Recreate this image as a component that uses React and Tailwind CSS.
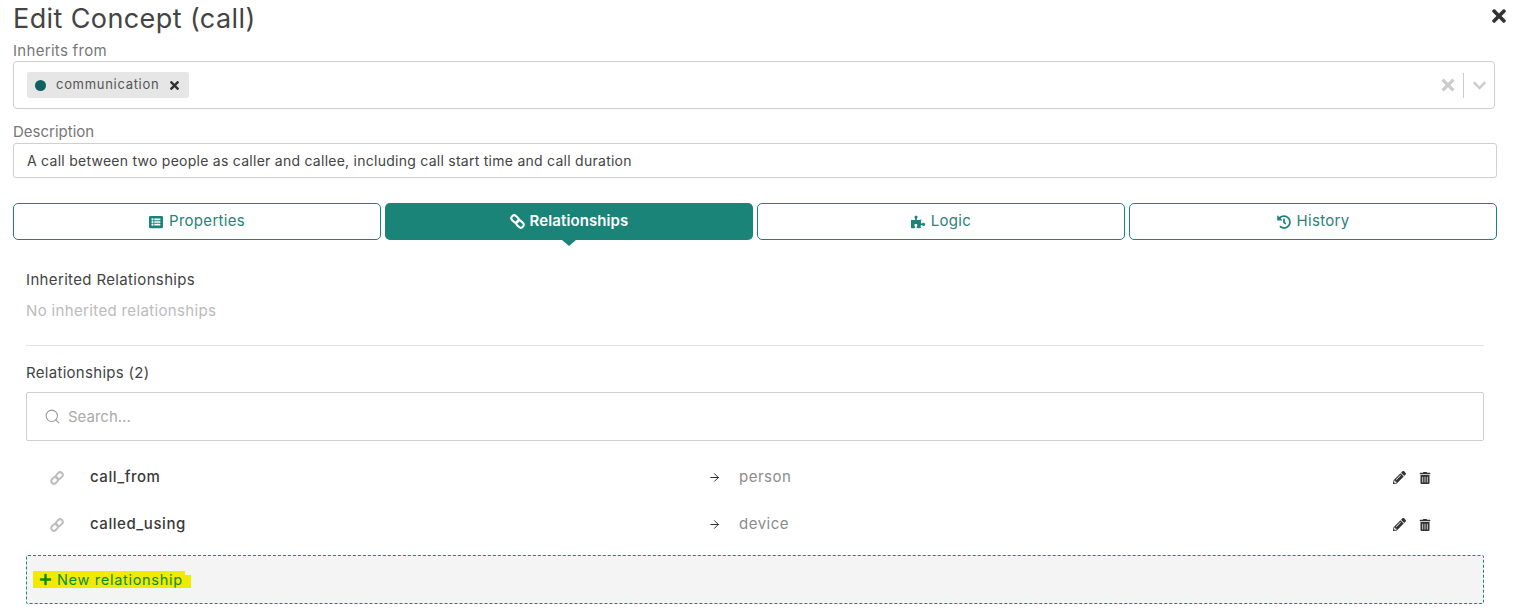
import React from 'react';
import { FaTimes, FaChevronDown, FaListAlt, FaPuzzlePiece, FaHistory, FaPencilAlt, FaTrashAlt, FaPlus } from 'react-icons/fa';
import { ArrowRight, Search } from 'lucide-react';

const tabs = [
  { label: 'Properties', icon: FaListAlt },
  { label: 'Relationships', active: true },
  { label: 'Logic', icon: FaPuzzlePiece },
  { label: 'History', icon: FaHistory },
];

const relationships = [
  { name: 'call_from', target: 'person' },
  { name: 'called_using', target: 'device' },
];

// two chain links, tilted like the old font-awesome link glyph
function ChainIcon({ className, flip }) {
  return (
    <svg viewBox="0 0 16 16" fill="none" stroke="currentColor" strokeWidth="2.2" className={className}>
      <g transform={flip ? 'rotate(45 8 8)' : 'rotate(-45 8 8)'}>
        <rect x="0" y="5" width="8.5" height="6" rx="3" />
        <rect x="7.5" y="5" width="8.5" height="6" rx="3" />
      </g>
    </svg>
  );
}

function Tab({ label, icon: Icon, active }) {
  if (active) {
    return (
      <button className="relative flex h-[37px] items-center justify-center gap-[5px] rounded-[5px] bg-[#1a8478] text-[15px] font-semibold tracking-[0.1px] text-white">
        <ChainIcon flip className="h-[15px] w-[15px]" />
        {label}
        <span className="absolute left-1/2 top-full -ml-[7px] h-0 w-0 border-x-[7px] border-t-[6px] border-x-transparent border-t-[#1a8478]" />
      </button>
    );
  }
  return (
    <button className="flex h-[37px] items-center justify-center gap-[6px] rounded-[5px] border border-[#1a8478] bg-white text-[15px] tracking-[0.3px] text-[#2b8177]">
      <Icon className="text-[14px] text-[#1a8478]" />
      {label}
    </button>
  );
}

function RelationshipRow({ name, target }) {
  return (
    <div className="flex h-[47px] items-center">
      <ChainIcon className="ml-[24px] h-[14px] w-[14px] text-[#bdbdbd]" />
      <span className="ml-[26px] w-[618px] text-[15px] font-medium tracking-[0.55px] text-[#3a3a3a]">{name}</span>
      <ArrowRight className="h-[13px] w-[13px] text-[#222]" strokeWidth={1.75} />
      <span className="ml-[18px] flex-1 text-[15px] tracking-[0.5px] text-[#8c8c8c]">{target}</span>
      <FaPencilAlt className="text-[13px] text-[#333]" />
      <FaTrashAlt className="ml-[13px] mr-[53px] text-[12px] text-[#333]" />
    </div>
  );
}

export default function App() {
  return (
    <div className="relative h-[616px] w-[1513px] overflow-hidden bg-white pl-[13px] pr-[16px] font-['Inter',sans-serif] text-[#444]">
      <FaTimes className="absolute right-[4px] top-[6px] text-[20px] text-[#333]" />

      <h1 className="h-[40px] text-[27px] leading-[37px] tracking-[0.4px] text-[#444]">Edit Concept (call)</h1>

      <div className="h-[21px] text-[15px] leading-[21px] tracking-[0.3px] text-[#777]">Inherits from</div>
      <div className="mr-[2px] flex h-[48px] items-center rounded-[4px] border border-[#cfcfcf] pl-[13px] pr-[7px]">
        <div className="flex h-[26px] w-[162px] items-center rounded-[2px] bg-[#e6e6e6] pl-[8px] text-[13px] tracking-[0.7px] text-[#555]">
          <span className="h-[11px] w-[11px] rounded-full bg-[#0f5f63]" />
          <span className="ml-[10px]">communication</span>
          <FaTimes className="ml-[9px] text-[13px] text-[#333]" />
        </div>
        <div className="ml-auto flex items-center">
          <FaTimes className="text-[18px] text-[#cccccc]" />
          <span className="ml-[6px] h-[25px] w-px bg-[#cccccc]" />
          <FaChevronDown className="ml-[8px] text-[15px] text-[#cccccc]" />
        </div>
      </div>

      <div className="mt-[12px] h-[22px] text-[15px] leading-[21px] text-[#777]">Description</div>
      <div className="flex h-[35px] items-center rounded-[3px] border border-[#cfcfcf] pl-[13px] text-[14px] tracking-[0.26px] text-[#444]">
        A call between two people as caller and callee, including call start time and call duration
      </div>

      <div className="mt-[25px] grid grid-cols-4 gap-[4px]">
        {tabs.map((tab) => (
          <Tab key={tab.label} {...tab} />
        ))}
      </div>

      <div className="pl-[13px] pr-[13px]">
        <div className="mt-[29px] text-[15px] leading-[22px] tracking-[0.35px] text-[#444]">Inherited Relationships</div>
        <div className="mt-[9px] text-[15px] leading-[22px] tracking-[0.35px] text-[#bbbbbb]">No inherited relationships</div>
        <div className="mt-[23px] border-t border-[#e2e2e2]" />
        <div className="mt-[16px] text-[15px] leading-[22px] tracking-[0.3px] text-[#444]">Relationships (2)</div>

        <div className="mt-[8px] flex h-[49px] items-center rounded-[2px] border border-[#cfcfcf] pl-[17px]">
          <Search className="h-[17px] w-[17px] text-[#999]" strokeWidth={1.5} />
          <span className="ml-[7px] pt-[1px] text-[15px] text-[#aaaaaa]">Search...</span>
        </div>

        <div className="mt-[13px]">
          {relationships.map((rel) => (
            <RelationshipRow key={rel.name} {...rel} />
          ))}
        </div>

        <div className="mt-[7px] flex h-[49px] items-center rounded-[2px] border border-dashed border-[#1a8478] bg-[#f4f4f4] pl-[6px]">
          <span className="relative flex h-[17px] w-[158px] items-center bg-[#f2ea00] pl-[6px] text-[14.5px] tracking-[0.7px] text-[#0d8a3c]">
            <FaPlus className="text-[13px] text-[#0b8a00]" />
            <span className="ml-[5px]">New relationship</span>
            <span className="absolute right-0 top-0 h-[4px] w-[6px] bg-[#f4f4f4]" />
          </span>
        </div>
      </div>
    </div>
  );
}
